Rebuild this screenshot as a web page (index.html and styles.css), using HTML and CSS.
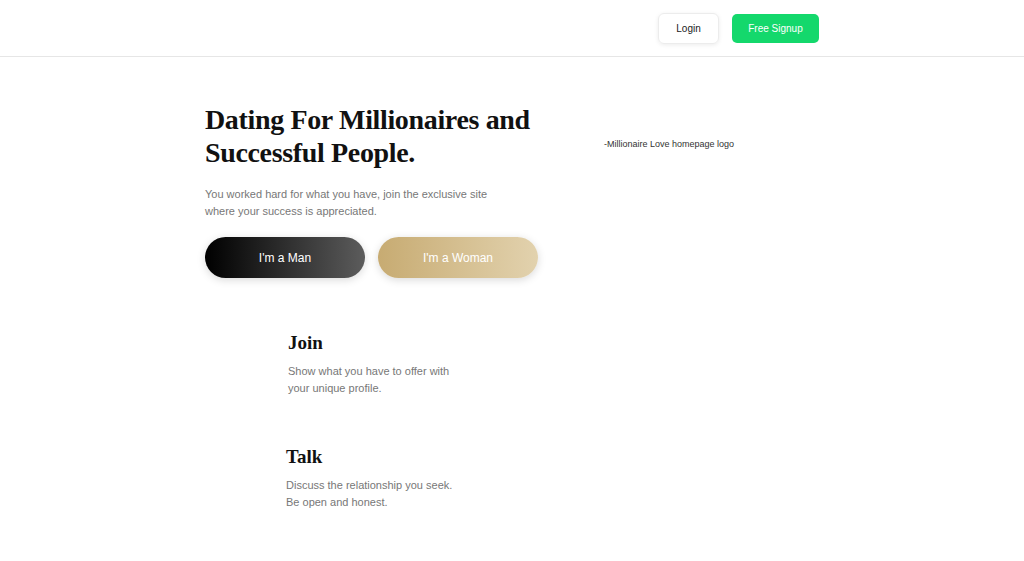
FILE: index.html
```html
<!DOCTYPE html>
<html lang="en">

<head>
    <meta charset="UTF-8">
    <title>Millionaire Love</title>
    <link rel="stylesheet" href="styles.css">
</head>

<body>
    <header class="topbar">
        <div class="wrap topbar-inner">
            <a class="login-button" href="#">Login</a>
            <a class="signup-button" href="#">Free Signup</a>
        </div>
    </header>

    <main class="wrap">
        <section class="hero">
            <div class="hero-text">
                <h1>Dating For Millionaires and Successful People.</h1>
                <p>You worked hard for what you have, join the exclusive site where your success is appreciated.</p>
                <div class="choice-buttons">
                    <button class="man-button">I'm a Man</button>
                    <button class="woman-button">I'm a Woman</button>
                </div>
            </div>
            <div class="hero-logo">-Millionaire Love homepage logo</div>
        </section>

        <section class="steps">
            <div class="step">
                <h2>Join</h2>
                <p>Show what you have to offer with<br>your unique profile.</p>
            </div>
            <div class="step step-talk">
                <h2>Talk</h2>
                <p>Discuss the relationship you seek.<br>Be open and honest.</p>
            </div>
        </section>
    </main>
</body>

</html>
```

FILE: styles.css
```css
body {
    font-family: "Liberation Sans", Arial, sans-serif;
    margin: 0;
    padding: 0;
    background: #fff;
    color: #111;
}

.wrap {
    width: 614px;
    margin: 0 auto;
}

.topbar {
    height: 56px;
    border-bottom: 1px solid #e6e6e6;
}

.topbar-inner {
    display: flex;
    justify-content: flex-end;
    align-items: center;
    gap: 13px;
    height: 100%;
}

.login-button {
    display: flex;
    align-items: center;
    justify-content: center;
    width: 59px;
    height: 29px;
    border: 1px solid #ececec;
    border-radius: 6px;
    box-shadow: 0 1px 4px rgba(0, 0, 0, 0.08);
    color: #222;
    font-size: 10px;
    text-decoration: none;
}

.signup-button {
    display: flex;
    align-items: center;
    justify-content: center;
    width: 87px;
    height: 29px;
    border-radius: 5px;
    background-color: #14d86c;
    color: #fff;
    font-size: 10px;
    text-decoration: none;
}

.hero {
    display: flex;
    padding-top: 46px;
}

.hero-text {
    width: 399px;
}

.hero h1 {
    font-family: "Liberation Serif", "DejaVu Serif", serif;
    font-weight: bold;
    font-size: 28px;
    line-height: 33px;
    margin: 0;
    width: 360px;
    letter-spacing: -0.35px;
}

.hero p {
    font-size: 11px;
    line-height: 17px;
    color: #777;
    margin: 17px 0 0;
    width: 300px;
}

.hero-logo {
    padding-top: 36px;
    font-size: 9px;
    color: #333;
}

.choice-buttons {
    display: flex;
    gap: 13px;
    margin-top: 17px;
}

.choice-buttons button {
    width: 160px;
    height: 41px;
    border: none;
    border-radius: 21px;
    color: #fff;
    font-family: "Liberation Sans", Arial, sans-serif;
    font-size: 12px;
    box-shadow: 0 2px 8px rgba(0, 0, 0, 0.15);
    cursor: pointer;
}

.man-button {
    background: linear-gradient(to right, #000, #5c5c5c);
}

.woman-button {
    background: linear-gradient(to right, #c7ab72, #e2d2ae);
}

.steps {
    padding: 53px 0 40px 83px;
}

.step h2 {
    font-family: "Liberation Serif", "DejaVu Serif", serif;
    font-weight: bold;
    font-size: 19px;
    line-height: 24px;
    margin: 0;
}

.step p {
    font-size: 11px;
    line-height: 17px;
    color: #777;
    margin: 8px 0 0;
}

.step-talk {
    margin-top: 48px;
    margin-left: -2px;
}
```
